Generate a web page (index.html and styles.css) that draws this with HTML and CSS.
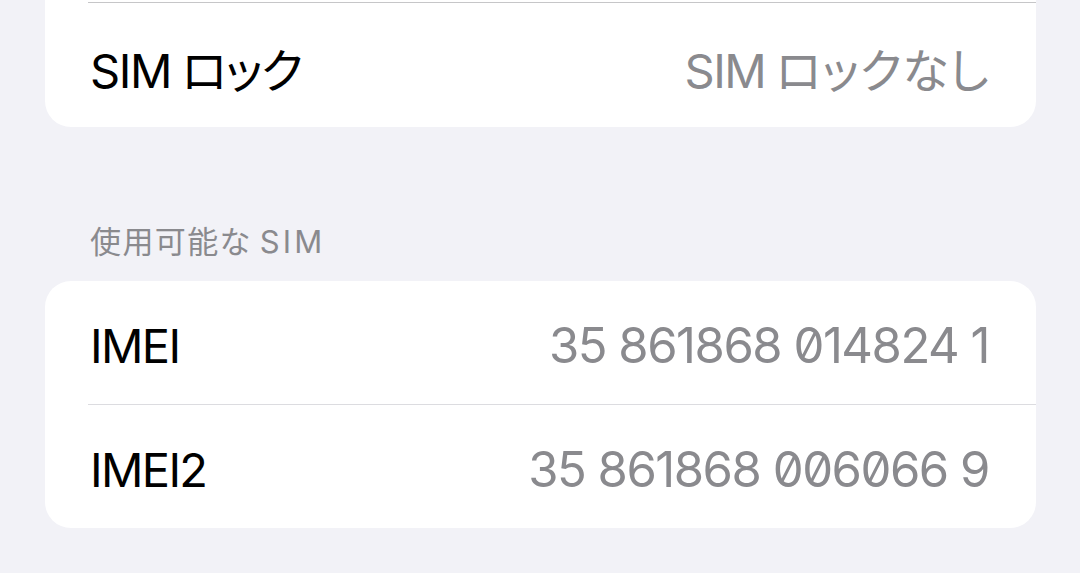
FILE: index.html
```html
<!doctype html>
<html lang="ja">
<head>
    <meta charset="UTF-8">
    <meta name="viewport" content="width=device-width, initial-scale=1.0">
    <title>情報</title>
    <link rel="stylesheet" href="styles.css">
</head>
<body>
<section class="group group-cut">
    <div class="row">
        <span class="label"><span class="latin">SIM</span>ロック</span>
        <span class="value"><span class="latin">SIM</span>ロックなし</span>
    </div>
</section>

<h2 class="group-title">使用可能な<span class="latin">SIM</span></h2>

<section class="group">
    <div class="row row-first">
        <span class="label">IMEI</span>
        <span class="value num">35 861868 014824 1</span>
    </div>
    <div class="row">
        <span class="label">IMEI2</span>
        <span class="value num">35 861868 006066 9</span>
    </div>
</section>
</body>
</html>
```

FILE: styles.css
```css
:root {
    --bg: #f2f2f7;
    --card: #fff;
    --text: #000;
    --muted: #8a8a8e;
    --line: #dcdce0;
    --line-dark: #c6c6c8;
}

body {
    margin: 0;
    padding: 0 44px 0 45px;
    background-color: var(--bg);
    font-family: Inter, "Noto Sans CJK JP", sans-serif;
    color: var(--text);
}

.group {
    background-color: var(--card);
    border-radius: 26px;
    padding-left: 43px;
}

/* the list above is scrolled off the top */
.group-cut {
    border-radius: 0 0 26px 26px;
    padding-top: 2px;
}

.row {
    box-sizing: border-box;
    display: flex;
    align-items: center;
    justify-content: space-between;
    height: 124px;
    padding: 6px 47px 0 0;
    border-top: 1px solid var(--line);
    font-size: 47px;
    font-feature-settings: "palt";
}

.group-cut .row {
    height: 125px;
    padding-top: 4px;
    border-top-color: var(--line-dark);
}

.row-first {
    height: 123px;
    border-top: none;
}

.label {
    padding-left: 2px;
    letter-spacing: -0.035em;
}

.value {
    color: var(--muted);
    font-size: 47px;
    letter-spacing: 0.01em;
}

.latin {
    margin-right: 0.22em;
    letter-spacing: -0.03em;
}

.num {
    font-size: 49px;
    letter-spacing: -0.03em;
    font-feature-settings: "zero";
}

.group-title {
    margin: 0;
    padding: 95px 0 19px 45px;
    line-height: 40px;
    font-size: 31px;
    font-weight: normal;
    letter-spacing: 0.045em;
    color: var(--muted);
}

.group-title .latin {
    margin: 0 0 0 0.25em;
    letter-spacing: 0.1em;
}
```
